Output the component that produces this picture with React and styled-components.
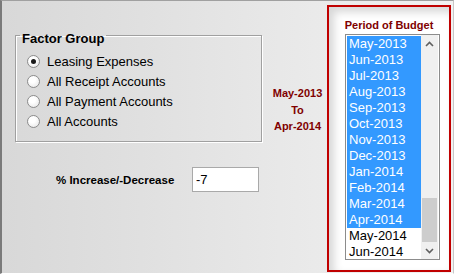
import React from 'react';
import styled, { createGlobalStyle } from 'styled-components';

const GlobalStyle = createGlobalStyle`
  html, body {
    margin: 0;
    padding: 0;
    overflow: hidden;
  }
  body {
    font-family: "Liberation Sans", Arial, sans-serif;
  }
`;

const factorGroups = [
  'Leasing Expenses',
  'All Receipt Accounts',
  'All Payment Accounts',
  'All Accounts',
];

const months = [
  'May-2013', 'Jun-2013', 'Jul-2013', 'Aug-2013', 'Sep-2013', 'Oct-2013',
  'Nov-2013', 'Dec-2013', 'Jan-2014', 'Feb-2014', 'Mar-2014', 'Apr-2014',
  'May-2014', 'Jun-2014',
];

const Chevron = ({ down }) => (
  <svg width="9" height="6" viewBox="0 0 9 6">
    <path
      d={down ? 'M1 1 L4.5 4.5 L8 1' : 'M1 5 L4.5 1.5 L8 5'}
      fill="none"
      stroke="#606060"
      strokeWidth="1.6"
    />
  </svg>
);

const App = () => {
  return (
    <>
      <GlobalStyle />
      <Frame>
        <LeftCol>
          <GroupBox>
            <Legend>Factor Group</Legend>
            {factorGroups.map((label, i) => (
              <RadioRow key={label}>
                <RadioCircle $checked={i === 0} />
                <span>{label}</span>
              </RadioRow>
            ))}
          </GroupBox>
          <FieldRow>
            <FieldLabel>% Increase/-Decrease</FieldLabel>
            <Input type="text" defaultValue="-7" />
          </FieldRow>
        </LeftCol>
        <RangeCol>
          <div>May-2013</div>
          <div>To</div>
          <div>Apr-2014</div>
        </RangeCol>
        <PeriodBox>
          <PeriodTitle>Period of Budget</PeriodTitle>
          <ListBox>
            <Items>
              {months.map((m, i) => (
                <Item key={m} $selected={i < 12}>{m}</Item>
              ))}
            </Items>
            <ScrollBar>
              <ScrollButton><Chevron /></ScrollButton>
              <Track>
                <Thumb />
              </Track>
              <ScrollButton><Chevron down /></ScrollButton>
            </ScrollBar>
          </ListBox>
        </PeriodBox>
      </Frame>
    </>
  );
};

export default App;

const Frame = styled.div`
  display: flex;
  width: 454px;
  height: 274px;
  box-sizing: border-box;
  border-top: 1px solid #a0a0a0;
  border-left: 2px solid #7a7a7a;
  border-right: 1px solid #c8c8c8;
  border-bottom: 1px solid #ffffff;
  background: linear-gradient(to right, #d8d8d8, #f2f2f2);
`;

const LeftCol = styled.div`
  width: 266px;
  display: flex;
  flex-direction: column;
`;

const GroupBox = styled.fieldset`
  margin: 24px 0 0 13px;
  width: 247px;
  box-sizing: border-box;
  padding: 5px 0 10px 4px;
  border: 1px solid #a0a0a0;
  box-shadow: 1px 1px 0 #ffffff, inset 1px 1px 0 #ffffff;
`;

const Legend = styled.legend`
  padding: 6px 2px 0;
  font-size: 13px;
  line-height: 15px;
  font-weight: bold;
  color: #000;
`;

const RadioRow = styled.div`
  display: flex;
  align-items: center;
  height: 20px;
  padding-left: 7px;
  gap: 7px;
  font-size: 13px;
  color: #000;
`;

const RadioCircle = styled.span`
  position: relative;
  width: 13px;
  height: 13px;
  box-sizing: border-box;
  border-radius: 50%;
  border: 1px solid #8c8c8c;
  background: radial-gradient(circle at 40% 35%, #ffffff 30%, #e2e2e2 100%);
  &::after {
    content: '';
    display: ${p => (p.$checked ? 'block' : 'none')};
    position: absolute;
    left: 3px;
    top: 3px;
    width: 5px;
    height: 5px;
    border-radius: 50%;
    background: #1a1a1a;
  }
`;

const FieldRow = styled.div`
  display: flex;
  align-items: center;
  margin-top: 25px;
  padding-left: 54px;
`;

const FieldLabel = styled.span`
  width: 136px;
  font-size: 11.5px;
  font-weight: bold;
  color: #000;
`;

const Input = styled.input`
  width: 67px;
  height: 25px;
  box-sizing: border-box;
  margin: 0;
  padding: 0 3px;
  border: 1px solid #a9a9a9;
  background: #fff;
  font-family: "Liberation Sans", Arial, sans-serif;
  font-size: 13px;
  color: #000;
  outline: none;
`;

const RangeCol = styled.div`
  width: 59px;
  padding-top: 84px;
  text-align: center;
  font-size: 11px;
  line-height: 16.5px;
  font-weight: bold;
  color: #800000;
`;

const PeriodBox = styled.div`
  margin-top: 4px;
  width: 124px;
  height: 267px;
  box-sizing: border-box;
  border: 2px solid #c00000;
  background: #ffffff;
  box-shadow: inset 5px 5px 8px rgba(0, 0, 0, 0.16);
`;

const PeriodTitle = styled.div`
  padding-top: 11px;
  text-align: center;
  font-size: 11px;
  line-height: 14px;
  font-weight: bold;
  color: #800000;
`;

const ListBox = styled.div`
  display: flex;
  margin: 2px 0 0 16px;
  width: 95px;
  height: 226px;
  box-sizing: border-box;
  border: 1px solid #8c8c8c;
  background: #fff;
  overflow: hidden;
`;

const Items = styled.div`
  width: 74px;
  padding: 1px 0 0 1px;
  overflow: hidden;
`;

const Item = styled.div`
  height: 16px;
  line-height: 16px;
  padding-left: 2px;
  font-size: 13px;
  white-space: nowrap;
  color: ${p => (p.$selected ? '#ffffff' : '#000000')};
  background: ${p => (p.$selected ? '#3399ff' : 'transparent')};
`;

const ScrollBar = styled.div`
  width: 17px;
  display: flex;
  flex-direction: column;
  background: #f0f0f0;
`;

const ScrollButton = styled.div`
  height: 17px;
  display: flex;
  align-items: center;
  justify-content: center;
`;

const Track = styled.div`
  flex: 1;
  display: flex;
  flex-direction: column;
`;

const Thumb = styled.div`
  margin: 146px 1px 0;
  height: 44px;
  background: #cdcdcd;
`;
